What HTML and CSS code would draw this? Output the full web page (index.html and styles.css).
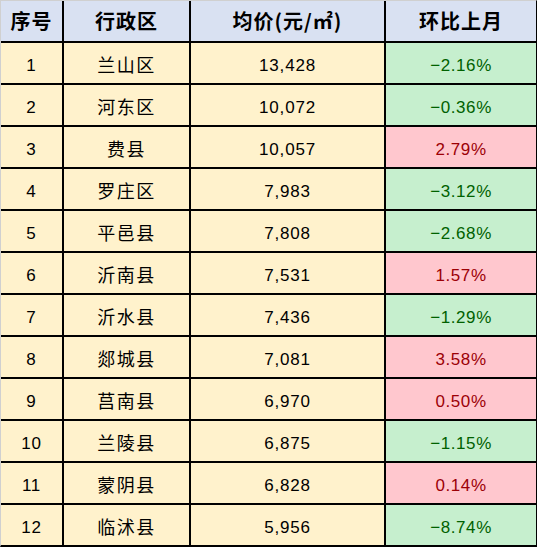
FILE: index.html
```html
<!DOCTYPE html>
<html lang="zh-CN">
<head>
<meta charset="utf-8">
<title>均价表</title>
<link rel="stylesheet" href="styles.css">
</head>
<body>
<div class="sheet">
  <div class="cell head">序号</div>
  <div class="cell head">行政区</div>
  <div class="cell head">均价(元/㎡)</div>
  <div class="cell head">环比上月</div>

  <div class="cell y num">1</div><div class="cell y zh">兰山区</div><div class="cell y num">13,428</div><div class="cell down">−2.16%</div>
  <div class="cell y num">2</div><div class="cell y zh">河东区</div><div class="cell y num">10,072</div><div class="cell down">−0.36%</div>
  <div class="cell y num">3</div><div class="cell y zh">费县</div><div class="cell y num">10,057</div><div class="cell up">2.79%</div>
  <div class="cell y num">4</div><div class="cell y zh">罗庄区</div><div class="cell y num">7,983</div><div class="cell down">−3.12%</div>
  <div class="cell y num">5</div><div class="cell y zh">平邑县</div><div class="cell y num">7,808</div><div class="cell down">−2.68%</div>
  <div class="cell y num">6</div><div class="cell y zh">沂南县</div><div class="cell y num">7,531</div><div class="cell up">1.57%</div>
  <div class="cell y num">7</div><div class="cell y zh">沂水县</div><div class="cell y num">7,436</div><div class="cell down">−1.29%</div>
  <div class="cell y num">8</div><div class="cell y zh">郯城县</div><div class="cell y num">7,081</div><div class="cell up">3.58%</div>
  <div class="cell y num">9</div><div class="cell y zh">莒南县</div><div class="cell y num">6,970</div><div class="cell up">0.50%</div>
  <div class="cell y num">10</div><div class="cell y zh">兰陵县</div><div class="cell y num">6,875</div><div class="cell down">−1.15%</div>
  <div class="cell y num">11</div><div class="cell y zh">蒙阴县</div><div class="cell y num">6,828</div><div class="cell up">0.14%</div>
  <div class="cell y num">12</div><div class="cell y zh">临沭县</div><div class="cell y num">5,956</div><div class="cell down">−8.74%</div>
</div>
</body>
</html>
```
FILE: styles.css
```css
html, body {
  margin: 0;
  padding: 0;
  background: #ffffff;
}
.sheet {
  width: 537px;
  height: 547px;
  box-sizing: border-box;
  display: grid;
  grid-template-columns: 61px 125px 193px 150px;
  grid-auto-rows: 40px;
  gap: 2px;
  background: #000000;
  border-top: 1px solid #d0d0d0;
  border-left: 1px solid #d0d0d0;
  border-right: 1px solid #000000;
  border-bottom: 2px solid #000000;
}
.cell {
  display: flex;
  align-items: center;
  justify-content: center;
  color: #000000;
  font-family: "Liberation Sans", "Noto Sans CJK SC", sans-serif;
  font-size: 17px;
  line-height: 1;
  padding-top: 4px;
  box-sizing: border-box;
}
.head {
  background: #d9e1f2;
  font-family: "Noto Sans CJK SC", sans-serif;
  font-weight: 700;
  font-size: 20px;
  letter-spacing: 1px;
  padding-top: 0;
}
.y {
  background: #fff2cc;
}
.num {
  letter-spacing: 0.8px;
}
.zh {
  font-family: "Noto Sans CJK SC", sans-serif;
  font-size: 18px;
  letter-spacing: 1.5px;
  padding-top: 2px;
}
.down {
  background: #c6efce;
  color: #006100;
  letter-spacing: 0.6px;
}
.up {
  background: #ffc7ce;
  color: #9c0006;
  letter-spacing: 0.6px;
}
```
